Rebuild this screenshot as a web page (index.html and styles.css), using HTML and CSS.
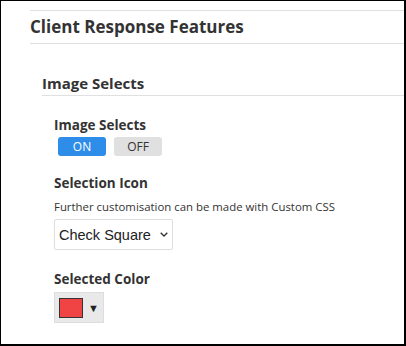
FILE: index.html
```html
<!DOCTYPE html>
<html lang="en">
  <head>
    <meta charset="UTF-8" />
    <meta name="viewport" content="width=device-width, initial-scale=1.0" />
    <title>Client Response Features</title>
    <link rel="stylesheet" href="styles.css">
  </head>
  <body>
    <div class="frame">
      <div class="panel">
        <h2 class="panel-title">Client Response Features</h2>

        <div class="section">
          <h3 class="section-title">Image Selects</h3>

          <div class="field">
            <label class="field-label">Image Selects</label>
            <div class="toggle">
              <button class="toggle-btn active">ON</button>
              <button class="toggle-btn">OFF</button>
            </div>
          </div>

          <div class="field field-icon">
            <label class="field-label">Selection Icon</label>
            <div class="field-help">Further customisation can be made with Custom CSS</div>
            <div class="select">
              <span>Check Square</span>
              <svg class="chevron" width="8" height="5" viewBox="0 0 8 5">
                <path d="M0.7 0.7l3.3 3.3 3.3-3.3" fill="none" stroke="#333" stroke-width="1.3" />
              </svg>
            </div>
          </div>

          <div class="field field-color">
            <label class="field-label">Selected Color</label>
            <div class="color-picker">
              <span class="swatch"></span>
              <span class="caret">&#9660;</span>
            </div>
          </div>
        </div>
      </div>
    </div>
  </body>
</html>
```

FILE: styles.css
```css
html,
body {
  margin: 0;
  padding: 0;
  background: #fff;
}

body {
  font-family: "Open Sans", "Noto Sans", sans-serif;
  color: #333;
}

.frame {
  width: 406px;
  height: 346px;
  box-sizing: border-box;
  border-top: 1px solid #000;
  border-left: 1px solid #000;
  border-right: 2px solid #000;
  border-bottom: 2px solid #000;
  overflow: hidden;
  padding: 9px 0 0 29px;
}

.panel {
  border-top: 1px solid #e0e0e0;
}

.panel-title {
  margin: 0;
  padding: 6px 0 6px;
  font-size: 17px;
  font-weight: 700;
  line-height: 20px;
  border-bottom: 1px solid #e0e0e0;
}

.section {
  padding: 30px 0 0 12px;
}

.section-title {
  margin: 0;
  font-size: 15px;
  font-weight: 700;
  line-height: 18px;
  padding-bottom: 3px;
  border-bottom: 1px solid #e0e0e0;
}

.field {
  padding-left: 12px;
  margin-top: 21px;
}

.field-icon {
  margin-top: 19px;
}

.field-color {
  margin-top: 21px;
}

.field-label {
  display: block;
  font-size: 13.5px;
  font-weight: 700;
  line-height: 16px;
}

.toggle {
  display: flex;
  gap: 8px;
  margin: 4px 0 0 4px;
}

.toggle-btn {
  width: 48px;
  height: 19px;
  padding: 0;
  border: none;
  border-radius: 3px;
  background: #e0e0e0;
  color: #333;
  font-family: "Open Sans", "Noto Sans", sans-serif;
  font-size: 12px;
  line-height: 19px;
}

.toggle-btn.active {
  background: #2e8de8;
  color: #fff;
}

.field-help {
  font-size: 11.4px;
  line-height: 14px;
  margin-top: 9px;
}

.select {
  display: inline-flex;
  align-items: center;
  gap: 9px;
  margin-top: 5px;
  height: 31px;
  box-sizing: border-box;
  padding: 0 4px 0 4px;
  border: 1px solid #ddd;
  border-radius: 2px;
  font-family: "Liberation Sans", Arial, sans-serif;
  font-size: 14.5px;
  color: #222;
}

.color-picker {
  display: inline-flex;
  align-items: center;
  gap: 5px;
  margin-top: 5px;
  width: 50px;
  height: 31px;
  box-sizing: border-box;
  padding: 0 4px;
  background: #e9e9e9;
  border: 1px solid #ddd;
}

.swatch {
  width: 27px;
  height: 20px;
  box-sizing: border-box;
  background: #f04444;
  border: 1px solid #333;
}

.caret {
  font-size: 11px;
  color: #222;
}
```
